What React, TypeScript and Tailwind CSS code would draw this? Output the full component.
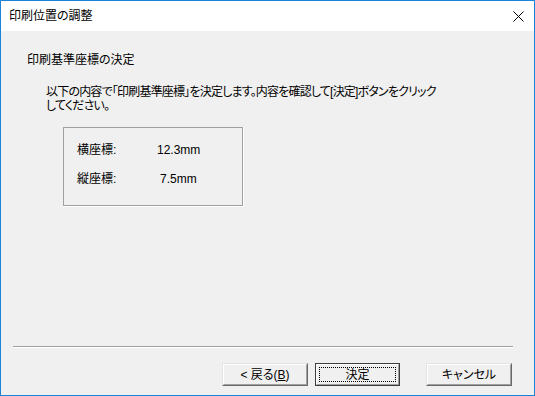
import React from "react";

const font = "font-['Liberation_Sans','Noto_Sans_CJK_JP',sans-serif] [font-feature-settings:'palt']";

const DialogButton: React.FC<{ label: React.ReactNode; isDefault?: boolean }> = ({ label, isDefault }) => {
  if (isDefault) {
    return (
      <div className="w-[85px] h-[23px] border border-[#3c3c3c] flex">
        <div className="flex-1 border-t border-l border-t-white border-l-white border-b border-r border-b-[#a0a0a0] border-r-[#a0a0a0] bg-[#f0f0f0] p-[2px] flex">
          <div className="flex-1 border border-dotted border-black flex items-center justify-center text-[12px] leading-none">
            {label}
          </div>
        </div>
      </div>
    );
  }
  return (
    <div className="w-[86px] h-[23px] border-t border-l border-t-[#e3e3e3] border-l-[#e3e3e3] border-b border-r border-b-[#696969] border-r-[#696969] flex">
      <div className="flex-1 border-t border-l border-t-white border-l-white border-b border-r border-b-[#a0a0a0] border-r-[#a0a0a0] bg-[#f0f0f0] flex items-center justify-center text-[12px] leading-none">
        {label}
      </div>
    </div>
  );
};

const App: React.FC = () => {
  return (
    <div className={`w-[535px] h-[396px] border border-[#1883d7] flex flex-col text-black ${font}`}>
      {/* title bar */}
      <div className="h-[30px] bg-white flex items-center justify-between pl-[8px] pr-[10px]">
        <span className="text-[12px] leading-none">印刷位置の調整</span>
        <svg width="11" height="11" viewBox="0 0 11 11">
          <path d="M0.5 0.5L10.5 10.5M10.5 0.5L0.5 10.5" stroke="#000" strokeWidth="1" />
        </svg>
      </div>

      <div className="flex-1 bg-[#f0f0f0] flex flex-col pt-[22px]">
        <div className="pl-[26px] text-[12px] leading-[15px]">印刷基準座標の決定</div>

        <p className="pl-[45px] mt-[17px] text-[12px] leading-[14px] tracking-[-0.8px]">
          以下の内容で「印刷基準座標」を決定します。内容を確認して[決定]ボタンをクリック
          <br />
          してください。
        </p>

        <div className="ml-[62px] mt-[14px] w-[181px] h-[80px] border-r border-b border-white">
          <div className="w-[180px] h-[79px] border border-[#a0a0a0] pl-[13px] pt-[15px] flex flex-col gap-[15px] text-[12px] leading-[14px]">
            <div className="flex">
              <span className="w-[80px]">横座標:</span>
              <span>12.3mm</span>
            </div>
            <div className="flex">
              <span className="w-[83px]">縦座標:</span>
              <span>7.5mm</span>
            </div>
          </div>
        </div>

        <div className="mt-auto ml-[12px] w-[500px] border-t border-[#a0a0a0] border-b border-b-white" />

        <div className="flex justify-end items-start pr-[22px] pt-[15px] pb-[9px]">
          <DialogButton
            label={
              <span>
                &lt; 戻る(<span className="underline">B</span>)
              </span>
            }
          />
          <div className="ml-[7px]">
            <DialogButton label="決定" isDefault />
          </div>
          <div className="ml-[26px]">
            <DialogButton label="キャンセル" />
          </div>
        </div>
      </div>
    </div>
  );
};

export default App;
